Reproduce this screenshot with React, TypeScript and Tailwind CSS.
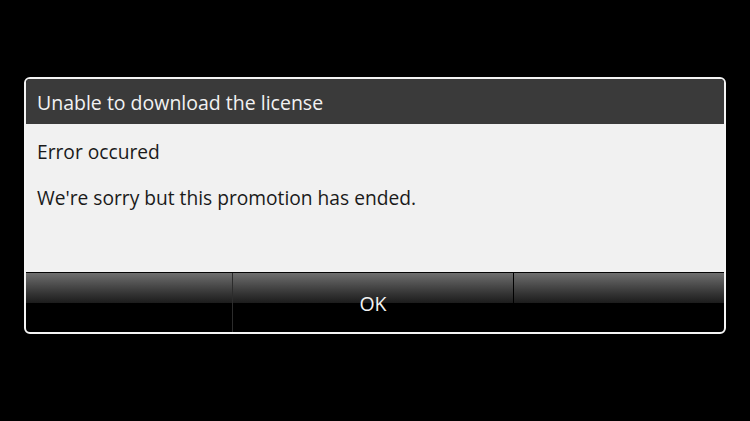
export default function App() {
  return (
    <div
      className="w-[750px] h-[421px] bg-black overflow-hidden pt-[77px] pl-[24px]"
      style={{ fontFamily: "'Open Sans', 'Noto Sans', sans-serif" }}
    >
      <div className="w-[702px] h-[257px] border-2 border-[#f4f4f4] rounded-[6px] overflow-hidden flex flex-col bg-black">
        <div className="h-[45px] bg-[#3a3a3a] flex items-center pl-[11px] pt-[2px] text-[19.5px] text-[#f2f2f2]">
          Unable to download the license
        </div>
        <div className="h-[148px] bg-[#f1f1f1] pl-[11px] pt-[16px] text-[19.2px] text-[#1a1a1a] leading-[24px] flex flex-col gap-[22px]">
          <div>Error occured</div>
          <div>We're sorry but this promotion has ended.</div>
        </div>
        <div className="h-[1px] bg-[#050505]" />
        <div className="flex-1 flex">
          <div className="w-[207px] flex flex-col border-r border-[#2c2c2c]">
            <div className="h-[30px] bg-gradient-to-b from-[#6f6f6f] to-[#1c1c1c]" />
          </div>
          <div className="w-[280px] flex flex-col relative">
            <div className="h-[30px] bg-gradient-to-b from-[#6f6f6f] to-[#1c1c1c]" />
            <div className="absolute inset-0 flex items-center justify-center pt-[2px] text-[19.5px] text-[#f2f2f2]">OK</div>
          </div>
          <div className="flex-1 flex flex-col">
            <div className="h-[30px] bg-gradient-to-b from-[#6f6f6f] to-[#1c1c1c] border-l border-black" />
          </div>
        </div>
      </div>
    </div>
  );
}
